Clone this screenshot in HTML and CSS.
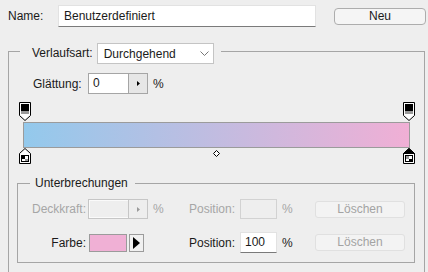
FILE: index.html
```html
<!DOCTYPE html>
<html lang="de">
<head>
    <meta charset="UTF-8">
    <title>Verlaufs-Editor</title>
    <link rel="stylesheet" href="styles.css">
</head>
<body>
<div class="dialog">
    <div class="name-row">
        <span class="name-label">Name:</span>
        <div class="name-input">Benutzerdefiniert</div>
        <button class="btn btn-new">Neu</button>
    </div>

    <fieldset class="group">
        <legend class="group-head">
            <span class="head-label">Verlaufsart:</span>
            <span class="select">Durchgehend
                <svg width="9" height="5" viewBox="0 0 9 5"><polyline points="0.5,0.5 4.5,4.5 8.5,0.5" fill="none" stroke="#777"/></svg>
            </span>
        </legend>

        <div class="smooth-row">
            <span class="smooth-label">Glättung:</span>
            <span class="spin">
                <span class="spin-value">0</span>
                <span class="spin-btn"><svg width="3" height="5" viewBox="0 0 3 5"><polygon points="0,0 3,2.5 0,5" fill="#000"/></svg></span>
            </span>
            <span class="unit">%</span>
        </div>

        <div class="ramp">
            <div class="ramp-bar"></div>
            <!-- opacity stops -->
            <svg class="stop stop-top stop-start" width="12" height="19" viewBox="0 0 12 19">
                <path d="M0.5 0.5H11.5V13.5L6 18.5L0.5 13.5Z" fill="#fff" stroke="#000"/>
                <rect x="2" y="2" width="8" height="7" fill="#000"/>
                <rect x="2" y="9" width="8" height="3" fill="#9a9a9a"/>
            </svg>
            <svg class="stop stop-top stop-end" width="12" height="19" viewBox="0 0 12 19">
                <path d="M0.5 0.5H11.5V13.5L6 18.5L0.5 13.5Z" fill="#fff" stroke="#000"/>
                <rect x="2" y="2" width="8" height="7" fill="#000"/>
                <rect x="2" y="9" width="8" height="3" fill="#9a9a9a"/>
            </svg>
            <!-- colour stops -->
            <svg class="stop stop-bottom stop-start" width="12" height="16" viewBox="0 0 12 16">
                <path d="M6 0.5L11.5 5.5V15.5H0.5V5.5Z" fill="#fff" stroke="#000"/>
                <rect x="2.5" y="7.5" width="7" height="6" fill="#fff" stroke="#000"/>
                <rect x="3" y="8" width="3" height="3" fill="#000"/>
                <rect x="6" y="11" width="3" height="2" fill="#9a9a9a"/>
            </svg>
            <svg class="stop stop-bottom stop-end" width="12" height="16" viewBox="0 0 12 16">
                <path d="M6 0.5L11.5 5.5V15.5H0.5V5.5Z" fill="#fff" stroke="#000"/>
                <path d="M6 0.5L11.5 5.5H0.5Z" fill="#000" stroke="#000"/>
                <rect x="2.5" y="7.5" width="7" height="6" fill="#fff" stroke="#000"/>
                <rect x="3" y="8" width="3" height="3" fill="#9a9a9a"/>
                <rect x="6" y="11" width="3" height="2" fill="#000"/>
            </svg>
            <svg class="midpoint" width="7" height="7" viewBox="0 0 7 7">
                <polygon points="3.5,0.5 6.5,3.5 3.5,6.5 0.5,3.5" fill="#fff" stroke="#000"/>
            </svg>
        </div>

        <fieldset class="stops">
            <legend class="stops-title">Unterbrechungen</legend>

            <div class="stop-row row-opacity off">
                <span class="row-label">Deckkraft:</span>
                <span class="field">
                    <span class="spin spin-off">
                        <span class="spin-value"></span>
                        <span class="spin-btn"><svg width="3" height="5" viewBox="0 0 3 5"><polygon points="0,0 3,2.5 0,5" fill="#9a9a9a"/></svg></span>
                    </span>
                </span>
                <span class="pct">%</span>
                <span class="pos-label">Position:</span>
                <span class="pos-input pos-off"></span>
                <span class="pct-pos">%</span>
                <button class="btn btn-delete">Löschen</button>
            </div>

            <div class="stop-row row-color">
                <span class="row-label">Farbe:</span>
                <span class="field">
                    <span class="swatch"></span>
                    <span class="swatch-btn"><svg width="7" height="12" viewBox="0 0 7 12"><polygon points="0,0 7,6 0,12" fill="#000"/></svg></span>
                </span>
                <span class="pct"></span>
                <span class="pos-label">Position:</span>
                <span class="pos-input">100</span>
                <span class="pct-pos">%</span>
                <button class="btn btn-delete">Löschen</button>
            </div>
        </fieldset>
    </fieldset>
</div>
</body>
</html>
```

FILE: styles.css
```css
* {
    box-sizing: border-box;
}

html,
body {
    margin: 0;
    overflow: hidden;
}

body {
    background-color: #eeeeee;
    font-family: "Liberation Sans", Arial, sans-serif;
    font-size: 12px;
    color: #1a1a1a;
}

.dialog {
    padding: 5px 0 0 8px;
}

/* name line */
.name-row {
    display: flex;
    align-items: center;
    height: 22px;
}

.name-label {
    width: 50px;
}

.name-input {
    width: 258px;
    height: 22px;
    line-height: 20px;
    padding-left: 5px;
    background-color: #fff;
    border: 1px solid #e2e2e2;
    border-bottom-color: #7a7a7a;
}

.btn {
    font-family: inherit;
    font-size: 12px;
    padding: 0;
    line-height: 15px;
    border-radius: 4px;
}

.btn-new {
    margin-left: 18px;
    width: 92px;
    height: 17px;
    color: #1a1a1a;
    background-color: #f5f5f5;
    border: 1px solid #adadad;
}

/* outer group */
.group {
    margin: 16px 3px 0 0;
    padding: 0 0 9px;
    min-width: 0;
    border: 1px solid #a5a5a5;
    border-bottom: 0;
}

.group-head {
    display: flex;
    align-items: flex-start;
    gap: 4px;
    height: 16px;
    margin-left: 11px;
    padding: 0 7px 0 12px;
}

.head-label {
    line-height: 21px;
}

.select {
    display: flex;
    align-items: center;
    justify-content: space-between;
    width: 117px;
    height: 21px;
    padding: 0 4px 0 6px;
    background-color: #fff;
    border: 1px solid #c4c4c4;
}

.smooth-row {
    display: flex;
    align-items: center;
    height: 21px;
    margin-top: 14px;
    padding-left: 24px;
}

.smooth-label {
    width: 55px;
}

.spin {
    display: flex;
    width: 60px;
    height: 21px;
    background-color: #fff;
    border: 1px solid #a5a5a5;
}

.spin-value {
    width: 39px;
    line-height: 19px;
    padding-left: 4px;
}

.spin-btn {
    display: flex;
    align-items: center;
    justify-content: center;
    flex: 1;
    background-color: #e6e6e6;
    border-left: 1px solid #a5a5a5;
}

.unit {
    margin-left: 5px;
}

/* gradient ramp */
.ramp {
    position: relative;
    margin: 8px 14px 0;
    padding: 20px 0 16px;
}

.ramp-bar {
    height: 26px;
    border: 1px solid #9b9b9b;
    background: linear-gradient(to right, #93c9ec, #f0afd5);
}

.stop {
    position: absolute;
    display: block;
}

.stop-top {
    top: 0;
}

.stop-bottom {
    top: 46px;
}

.stop-start {
    left: -4px;
}

.stop-end {
    right: -5px;
}

.midpoint {
    position: absolute;
    display: block;
    top: 48px;
    left: 50%;
    margin-left: -4px;
}

/* stops group */
.stops {
    margin: 12px 9px 0 8px;
    padding: 9px 0;
    min-width: 0;
    border: 1px solid #a5a5a5;
}

.stops-title {
    margin-left: 12px;
    padding: 0 7px 0 5px;
    line-height: 14px;
}

.stop-row {
    display: flex;
    align-items: center;
    height: 20px;
}

.row-color {
    height: 21px;
    margin-top: 13px;
}

.off {
    color: #a6a6a6;
}

.row-label {
    width: 68px;
    text-align: right;
}

.field {
    display: flex;
    align-items: center;
    width: 60px;
    margin-left: 2px;
}

.spin-off {
    height: 20px;
    background-color: #eeeeee;
    border-color: #c6c6c6;
    box-shadow: inset 0 0 0 1px #fafafa;
}

.spin-off .spin-btn {
    background-color: #eeeeee;
    border-left-color: #c6c6c6;
}

.swatch {
    width: 38px;
    height: 18px;
    margin-left: 1px;
    background-color: #f0b0d5;
    border: 1px solid #9b9b9b;
}

.swatch-btn {
    display: flex;
    align-items: center;
    justify-content: center;
    width: 15px;
    height: 18px;
    margin-left: 2px;
    background-color: #f0f0f0;
    border: 1px solid #9b9b9b;
}

.pct {
    width: 36px;
    margin-left: 5px;
}

.pos-label {
    width: 46px;
    text-align: right;
}

.pos-input {
    width: 37px;
    height: 21px;
    margin-left: 5px;
    padding-left: 4px;
    line-height: 19px;
    color: #1a1a1a;
    background-color: #fff;
    border: 1px solid #e2e2e2;
    border-bottom-color: #7a7a7a;
}

.pos-off {
    height: 20px;
    background-color: #eeeeee;
    border-color: #d2d2d2;
}

.pct-pos {
    width: 33px;
    margin-left: 5px;
}

.btn-delete {
    width: 90px;
    height: 17px;
    color: #a3a3a3;
    background-color: #f3f3f3;
    border: 1px solid #e0e0e0;
    border-radius: 3px;
}
```
